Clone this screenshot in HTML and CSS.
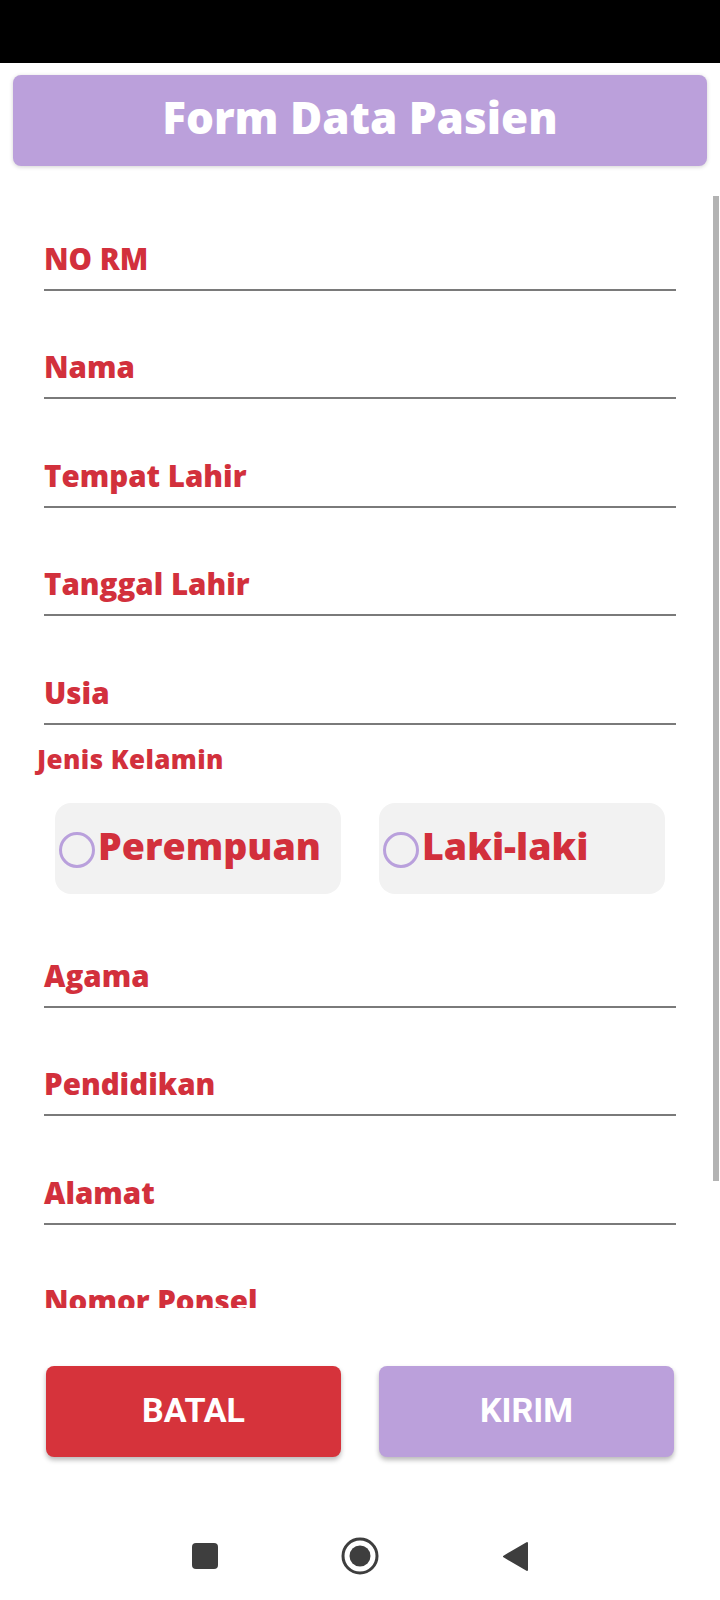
FILE: index.html
```html
<!DOCTYPE html>
<html lang="id">
<head>
<meta charset="utf-8">
<title>Form Data Pasien</title>
<link rel="stylesheet" href="styles.css">
</head>
<body>
<div class="status-bar"></div>
<header class="title-card"><h1 class="title">Form Data Pasien</h1></header>
<main class="scroll">
  <div class="field"><span class="label">NO RM</span></div>
  <div class="field"><span class="label">Nama</span></div>
  <div class="field"><span class="label">Tempat Lahir</span></div>
  <div class="field"><span class="label">Tanggal Lahir</span></div>
  <div class="field"><span class="label">Usia</span></div>
  <div class="jk-label">Jenis Kelamin</div>
  <div class="radio-row">
    <label class="radio-box"><span class="radio"></span><span class="radio-text">Perempuan</span></label>
    <label class="radio-box"><span class="radio"></span><span class="radio-text">Laki-laki</span></label>
  </div>
  <div class="field field-after-radio"><span class="label">Agama</span></div>
  <div class="field"><span class="label">Pendidikan</span></div>
  <div class="field"><span class="label">Alamat</span></div>
  <div class="field"><span class="label">Nomor Ponsel</span></div>
  <div class="scrollbar"></div>
</main>
<div class="buttons">
  <button class="btn btn-cancel">BATAL</button>
  <button class="btn btn-send">KIRIM</button>
</div>
<nav class="navbar">
  <span class="nav-item">
    <svg width="26" height="26" viewBox="0 0 26 26"><rect x="0" y="0" width="26" height="26" rx="4" fill="#3e3e3e"/></svg>
  </span>
  <span class="nav-item">
    <svg width="38" height="38" viewBox="0 0 38 38"><circle cx="19" cy="19" r="17" fill="none" stroke="#3e3e3e" stroke-width="3"/><circle cx="19" cy="19" r="10.5" fill="#3e3e3e"/></svg>
  </span>
  <span class="nav-item">
    <svg width="28" height="31" viewBox="0 0 28 31"><path d="M3 15.5 L26 2 L26 29 Z" fill="#3e3e3e" stroke="#3e3e3e" stroke-width="2" stroke-linejoin="round"/></svg>
  </span>
</nav>
</body>
</html>
```
FILE: styles.css
```css
html, body {
  margin: 0;
  padding: 0;
}
body {
  width: 720px;
  height: 1600px;
  overflow: hidden;
  background: #ffffff;
  font-family: "Open Sans", "Noto Sans", sans-serif;
}
.status-bar {
  height: 63px;
  background: #000000;
}
.title-card {
  margin: 12px 13px 0;
  height: 91px;
  background: #bba0db;
  border-radius: 8px;
  box-shadow: 0 1px 4px rgba(0, 0, 0, 0.18);
  display: flex;
  align-items: center;
  justify-content: center;
}
.title {
  margin: 0 0 8px;
  color: #ffffff;
  font-size: 44px;
  font-weight: 800;
  line-height: 1;
}
.scroll {
  position: relative;
  margin-top: 16px;
  height: 1126px;
  overflow: hidden;
}
.field {
  box-sizing: border-box;
  height: 108.5px;
  margin: 0 44px;
  border-bottom: 2px solid #7a7a7a;
  display: flex;
  align-items: flex-end;
  padding-bottom: 16px;
}
.label {
  color: #d2303c;
  font-size: 29.5px;
  font-weight: 800;
  line-height: 29px;
  white-space: nowrap;
}
.jk-label {
  margin: 19.5px 0 0 37px;
  color: #d2303c;
  font-size: 26px;
  font-weight: 800;
  letter-spacing: 0.4px;
  line-height: 30px;
}
.radio-row {
  margin: 29px 0 0 55px;
  display: flex;
  gap: 38px;
}
.radio-box {
  box-sizing: border-box;
  width: 286px;
  height: 91px;
  background: #f2f2f2;
  border-radius: 16px;
  display: flex;
  align-items: center;
  padding-left: 4px;
}
.radio {
  box-sizing: border-box;
  width: 36px;
  height: 36px;
  border: 3px solid #b9a0dc;
  border-radius: 50%;
  flex: none;
  margin-top: 2px;
}
.radio-text {
  margin: 0 0 6px 3px;
  color: #d2303c;
  font-size: 37.5px;
  font-weight: 800;
  line-height: 1;
}
.field-after-radio {
  margin-top: 5px;
}
.scrollbar {
  position: absolute;
  right: 1px;
  top: 14px;
  width: 6px;
  height: 985px;
  background: #b3b3b3;
}
.buttons {
  margin: 58px 0 0 46px;
  display: flex;
  gap: 38px;
}
.btn {
  width: 295px;
  height: 91px;
  border: none;
  border-radius: 8px;
  color: #ffffff;
  font-family: Roboto, "Liberation Sans", sans-serif;
  font-size: 34px;
  font-weight: 700;
  box-shadow: 0 3px 5px rgba(0, 0, 0, 0.28);
  padding: 0 0 4px;
}
.btn-cancel {
  background: #d6333b;
}
.btn-send {
  background: #bba0db;
}
.navbar {
  margin-top: 55px;
  height: 88px;
  display: flex;
  justify-content: center;
  align-items: center;
  gap: 115px;
}
.nav-item {
  width: 40px;
  display: flex;
  justify-content: center;
}
```
